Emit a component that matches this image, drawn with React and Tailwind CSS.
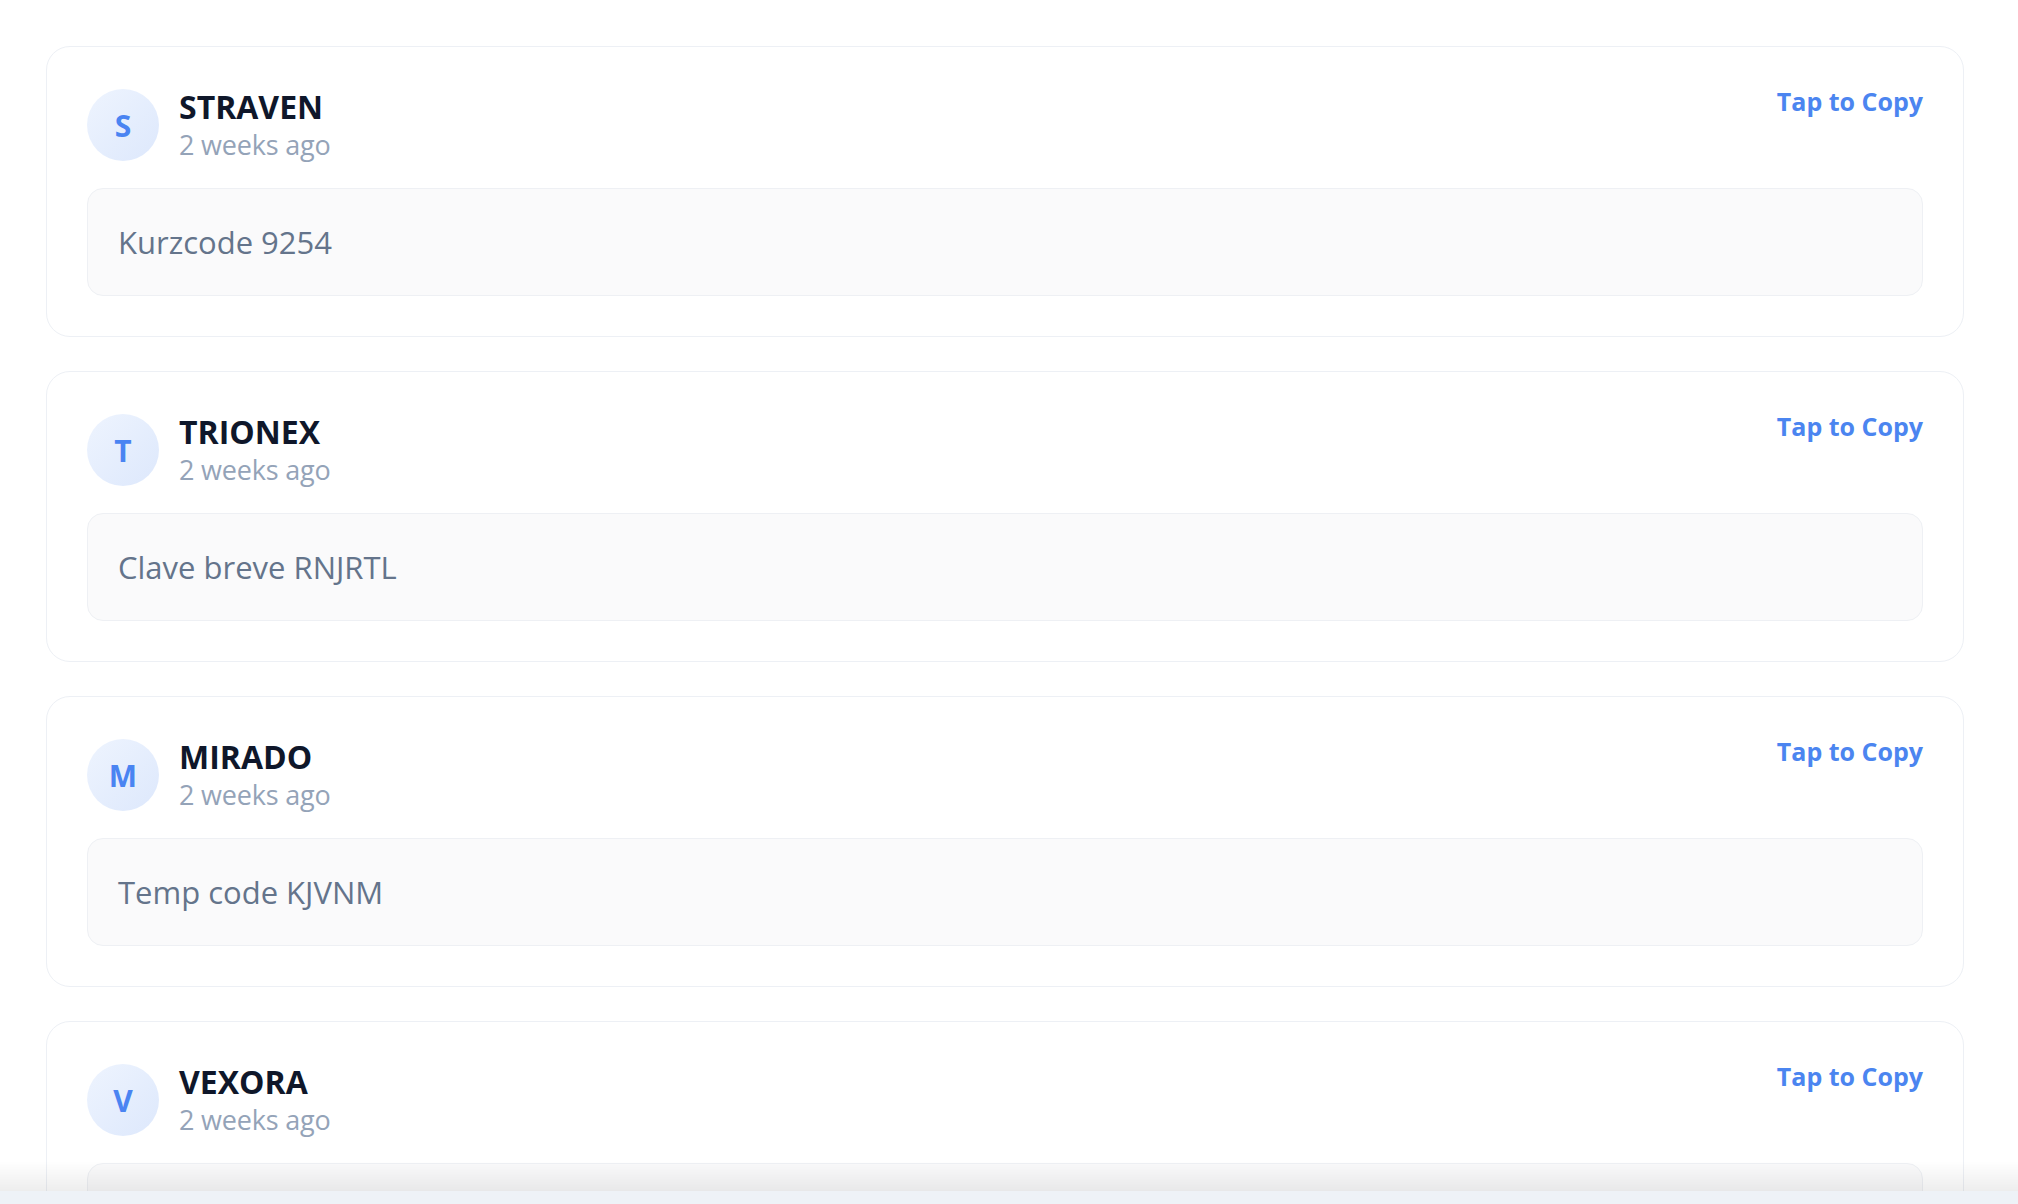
import React from "react";

const items = [
  { name: "STRAVEN", code: "Kurzcode 9254" },
  { name: "TRIONEX", code: "Clave breve RNJRTL" },
  { name: "MIRADO", code: "Temp code KJVNM" },
  { name: "VEXORA", code: "Código 58213" },
];

function Card({ name, code }) {
  return (
    <div className="flex flex-col gap-[25px] rounded-3xl border border-[#edf0f5] bg-white p-10">
      <div className="flex items-start justify-between">
        <div className="flex items-center gap-5">
          <div className="flex h-[72px] w-[72px] items-center justify-center rounded-full bg-gradient-to-br from-[#eef4fe] to-[#dde8fc] text-[30px] font-bold text-[#4a84f2]">
            {name[0]}
          </div>
          <div className="flex flex-col">
            <div className="text-[32px] font-bold leading-[40px] text-[#0f172a]">{name}</div>
            <div className="text-[27px] leading-[36px] tracking-[-0.2px] text-[#94a3b8]">2 weeks ago</div>
          </div>
        </div>
        <div className="text-[25px] font-bold leading-[28px] text-[#4b85f0]">Tap to Copy</div>
      </div>
      <div className="rounded-2xl border border-[#eef0f4] bg-[#fafafb] px-[30px] py-[33px] text-[31px] leading-[40px] text-[#64748b]">
        {code}
      </div>
    </div>
  );
}

export default function App() {
  return (
    <div
      className="relative min-h-screen bg-white pl-[46px] pr-[54px] pt-[46px] pb-[60px]"
      style={{ fontFamily: '"Open Sans", "Noto Sans", sans-serif' }}
    >
      <div className="flex flex-col gap-[34px]">
        {items.map((it) => (
          <Card key={it.name} {...it} />
        ))}
      </div>
      <div className="fixed bottom-0 left-0 right-0 flex flex-col">
        <div className="h-[30px] bg-gradient-to-b from-transparent to-black/[0.07]" />
        <div className="h-[13px] bg-[#eef2f7]" />
      </div>
    </div>
  );
}
